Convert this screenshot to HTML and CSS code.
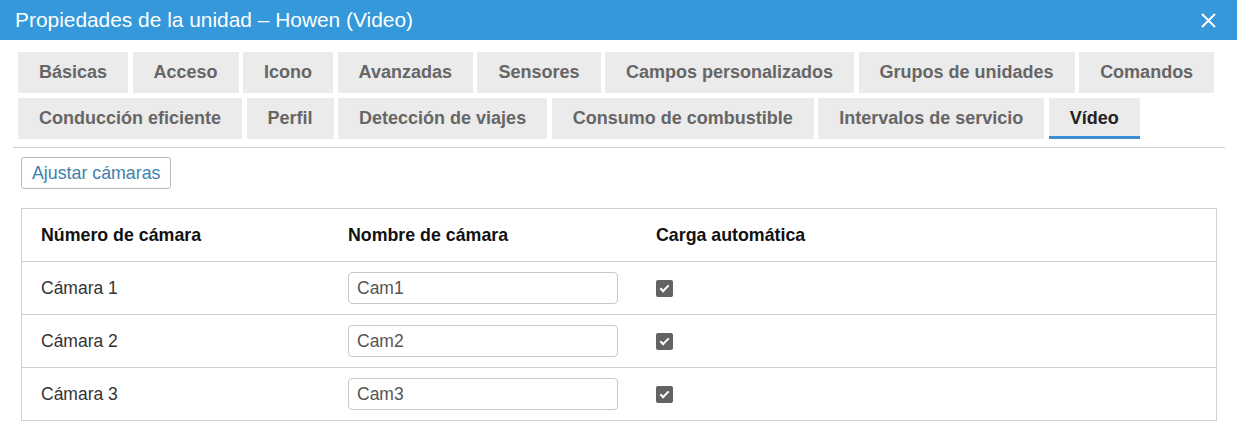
FILE: index.html
```html
<!DOCTYPE html>
<html lang="es">

<head>
    <meta charset="UTF-8">
    <meta name="viewport" content="width=device-width, initial-scale=1.0">
    <title>Propiedades de la unidad</title>
    <link rel="stylesheet" href="styles.css">
</head>

<body>
    <div id="dialog">
        <div id="header">
            <span class="title">Propiedades de la unidad &ndash; Howen (Video)</span>
            <button class="close" title="Cerrar">
                <svg width="15" height="15" viewBox="0 0 15 15">
                    <path d="M1 1 L14 14 M14 1 L1 14" stroke="#fff" stroke-width="2" fill="none" />
                </svg>
            </button>
        </div>

        <div id="content">
            <div id="tabs">
                <a href="#" class="tab">Básicas</a>
                <a href="#" class="tab">Acceso</a>
                <a href="#" class="tab">Icono</a>
                <a href="#" class="tab">Avanzadas</a>
                <a href="#" class="tab">Sensores</a>
                <a href="#" class="tab">Campos personalizados</a>
                <a href="#" class="tab">Grupos de unidades</a>
                <a href="#" class="tab">Comandos</a>
                <a href="#" class="tab">Conducción eficiente</a>
                <a href="#" class="tab">Perfil</a>
                <a href="#" class="tab">Detección de viajes</a>
                <a href="#" class="tab">Consumo de combustible</a>
                <a href="#" class="tab">Intervalos de servicio</a>
                <a href="#" class="tab active">Vídeo</a>
            </div>

            <div id="panel">
                <button class="btn">Ajustar cámaras</button>

                <table id="cameras">
                    <tr>
                        <th>Número de cámara</th>
                        <th>Nombre de cámara</th>
                        <th>Carga automática</th>
                    </tr>
                    <tr>
                        <td>Cámara 1</td>
                        <td><input type="text" class="name" value="Cam1"></td>
                        <td><span class="check"></span></td>
                    </tr>
                    <tr>
                        <td>Cámara 2</td>
                        <td><input type="text" class="name" value="Cam2"></td>
                        <td><span class="check"></span></td>
                    </tr>
                    <tr>
                        <td>Cámara 3</td>
                        <td><input type="text" class="name" value="Cam3"></td>
                        <td><span class="check"></span></td>
                    </tr>
                </table>
            </div>
        </div>
    </div>
</body>

</html>
```

FILE: styles.css
```css
body {
    background-color: #fff;
    font-family: "Liberation Sans", Arial, sans-serif;
    font-size: 17.5px;
    margin: 0;
    padding: 0;
}

#header {
    background-color: #3498db;
    color: #fff;
    height: 40px;
    display: flex;
    align-items: center;
    justify-content: space-between;
    padding: 0 21px 0 15px;
}

#header .title {
    font-size: 20.9px;
}

#header .close {
    background: none;
    border: 0;
    padding: 0;
    width: 15px;
    height: 15px;
    cursor: pointer;
}

#content {
    padding: 0 12px 0 13px;
}

#tabs {
    display: flex;
    flex-wrap: wrap;
    gap: 5px 4.5px;
    padding: 12px 0 8px 5px;
    border-bottom: 1px solid #d0d0d0;
}

.tab {
    display: block;
    height: 41px;
    line-height: 41px;
    padding: 0 21px;
    background-color: #ebebeb;
    color: #666;
    font-size: 18px;
    font-weight: bold;
    text-decoration: none;
    box-sizing: border-box;
}

.tab.active {
    color: #222;
    border-bottom: 3px solid #3a8fd5;
    line-height: 40px;
}

#panel {
    padding: 9px 8px 0 8px;
}

.btn {
    font-family: inherit;
    font-size: 17.8px;
    color: #3f7fae;
    background-color: #fff;
    border: 1px solid #b8b8b8;
    border-radius: 3px;
    height: 32px;
    padding: 0 10px;
}

#cameras {
    margin-top: 19px;
    width: 100%;
    border-collapse: collapse;
    border: 1px solid #d0d0d0;
}

#cameras th,
#cameras td {
    text-align: left;
    padding: 0 19px;
    height: 52px;
    border-bottom: 1px solid #d0d0d0;
}

#cameras th {
    color: #111;
    font-size: 17.8px;
    font-weight: bold;
    height: 52px;
}

#cameras td {
    color: #333;
}

#cameras th:nth-child(1),
#cameras th:nth-child(2) {
    width: 269px;
}

.name {
    font-family: inherit;
    font-size: 17.5px;
    color: #555;
    width: 270px;
    height: 32px;
    box-sizing: border-box;
    border: 1px solid #c8c8c8;
    border-radius: 4px;
    padding: 0 8px;
    display: block;
}

.check {
    display: block;
    width: 17px;
    height: 17px;
    background-color: #636363;
    border-radius: 2px;
    position: relative;
}

.check::after {
    content: "";
    position: absolute;
    left: 6px;
    top: 3px;
    width: 3px;
    height: 7px;
    border: solid #fff;
    border-width: 0 2px 2px 0;
    transform: rotate(45deg);
}
```
